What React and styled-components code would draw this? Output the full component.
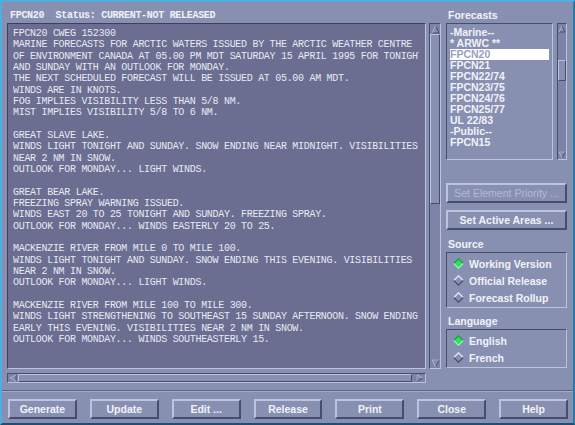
import styled, { createGlobalStyle } from 'styled-components';

const FACE = '#8890b2';
const WELL = '#6b6e90';
const LIGHT = '#bcc3de';
const DARK = '#474d6e';
const INK = '#f1f2f8';

const GlobalStyle = createGlobalStyle`
  html, body {
    margin: 0;
    padding: 0;
    background: ${FACE};
  }
  body {
    font-family: "Liberation Sans", Arial, sans-serif;
  }
`;

const Window = styled.div`
  width: 575px;
  height: 425px;
  box-sizing: border-box;
  border: 2px solid;
  border-color: #4eaee0 #2f78a4 #1d4f72 #4eaee0;
  background: ${FACE};
  display: flex;
  flex-direction: column;
  padding: 6px 4px 0 5px;
`;

const Main = styled.div`
  display: flex;
  gap: 5px;
  height: 374px;
`;

const LeftColumn = styled.div`
  width: 434px;
  display: flex;
  flex-direction: column;
`;

const Title = styled.div`
  height: 15px;
  line-height: 15px;
  padding-left: 3px;
  font-family: "Liberation Mono", "DejaVu Sans Mono", monospace;
  font-size: 10px;
  letter-spacing: -0.3px;
  font-weight: bold;
  color: ${INK};
  white-space: pre;
`;

const TextRow = styled.div`
  display: flex;
  gap: 3px;
  height: 346px;
`;

const TextBox = styled.div`
  flex: 1;
  box-sizing: border-box;
  background: ${WELL};
  border: 1px solid;
  border-color: #3c405e ${LIGHT} ${LIGHT} #3c405e;
  padding: 4px 6px 0 5px;
  overflow: hidden;
`;

const TextClip = styled.pre`
  margin: 0;
  overflow: hidden;
  font-family: "Liberation Mono", "DejaVu Sans Mono", monospace;
  font-size: 10px;
  letter-spacing: -0.3px;
  line-height: 11.33px;
  color: #e7e9f3;
`;

const Scroll = styled.div`
  box-sizing: border-box;
  display: flex;
  flex-direction: ${({ $horizontal }) => ($horizontal ? 'row' : 'column')};
  width: ${({ $w }) => $w}px;
  height: ${({ $h }) => $h}px;
  border: 1px solid;
  border-color: ${DARK} ${LIGHT} ${LIGHT} ${DARK};
  background: #7c83a6;
`;

const Thumb = styled.div`
  box-sizing: border-box;
  border: 1px solid;
  border-color: ${LIGHT} ${DARK} ${DARK} ${LIGHT};
  background: ${FACE};
  ${({ $horizontal, $size }) => ($horizontal ? `width: ${$size}px;` : `height: ${$size}px;`)}
  flex-shrink: 0;
`;

const Spacer = styled.div`
  flex: 1;
`;

const ArrowCell = styled.div`
  display: flex;
  align-items: center;
  justify-content: center;
  flex-shrink: 0;
  width: ${({ $w }) => $w}px;
  height: ${({ $h }) => $h}px;
`;

const HScrollRow = styled.div`
  margin-top: 4px;
  width: 419px;
`;

const RightColumn = styled.div`
  width: 121px;
  display: flex;
  flex-direction: column;
`;

const Label = styled.div`
  height: 15px;
  line-height: 15px;
  padding-left: 2px;
  margin-top: ${({ $top }) => $top || 0}px;
  font-size: 10.5px;
  font-weight: bold;
  color: ${INK};
`;

const ListRow = styled.div`
  display: flex;
  justify-content: space-between;
  height: 137px;
`;

const ListBox = styled.div`
  width: 107px;
  box-sizing: border-box;
  border: 1px solid;
  border-color: ${DARK} ${LIGHT} ${LIGHT} ${DARK};
  padding: 3px 3px 0 3px;
  overflow: hidden;
`;

const ListItem = styled.div`
  height: 11px;
  line-height: 11px;
  font-size: 10.5px;
  font-weight: bold;
  color: ${({ $selected }) => ($selected ? '#98a0c2' : INK)};
  background: ${({ $selected }) => ($selected ? '#ffffff' : 'transparent')};
  white-space: pre;
`;

const SideButton = styled.button`
  display: block;
  width: 121px;
  height: 20px;
  margin-top: ${({ $top }) => $top}px;
  padding: 0;
  box-sizing: border-box;
  border: 2px solid;
  border-color: ${LIGHT} ${DARK} ${DARK} ${LIGHT};
  background: ${FACE};
  font-family: "Liberation Sans", Arial, sans-serif;
  font-size: ${({ disabled }) => (disabled ? '10.5px' : '10.5px')};
  font-weight: ${({ disabled }) => (disabled ? 'normal' : 'bold')};
  color: ${({ disabled }) => (disabled ? '#b3b9d5' : INK)};
`;

const RadioBox = styled.div`
  box-sizing: border-box;
  border: 1px solid;
  border-color: ${DARK} ${LIGHT} ${LIGHT} ${DARK};
  padding: 2px 0 1px 6px;
`;

const RadioRow = styled.div`
  display: flex;
  align-items: center;
  gap: 5px;
  height: 17px;
  font-size: 10.5px;
  font-weight: bold;
  color: ${INK};
`;

const Separator = styled.div`
  margin-top: 8px;
  height: 0;
  border-top: 1px solid #5a6084;
  border-bottom: 1px solid #a4abca;
  margin-left: -5px;
  margin-right: -4px;
`;

const ButtonBar = styled.div`
  display: grid;
  grid-template-columns: repeat(7, 1fr);
  gap: 13px;
  margin-top: 7px;
  padding: 0 1px 0 1px;
`;

const BarButton = styled.button`
  height: 20px;
  padding: 0;
  box-sizing: border-box;
  border: 2px solid;
  border-color: ${LIGHT} ${DARK} ${DARK} ${LIGHT};
  background: ${FACE};
  font-family: "Liberation Sans", Arial, sans-serif;
  font-size: 10.5px;
  font-weight: bold;
  color: ${INK};
`;

const Arrow = ({ dir, size = 9 }) => {
  const s = size;
  const pts = {
    up: [[s / 2, 1], [s - 1, s - 1], [1, s - 1]],
    down: [[1, 1], [s - 1, 1], [s / 2, s - 1]],
    left: [[1, s / 2], [s - 1, 1], [s - 1, s - 1]],
    right: [[1, 1], [s - 1, s / 2], [1, s - 1]],
  }[dir];
  const str = (arr) => arr.map((p) => p.join(',')).join(' ');
  return (
    <svg width={s} height={s} viewBox={`0 0 ${s} ${s}`}>
      <polygon points={str(pts)} fill={FACE} stroke={DARK} strokeWidth="1" />
      <polyline
        points={str(dir === 'up' ? [pts[2], pts[0]] : dir === 'left' ? [pts[2], pts[0], pts[1]] : [pts[2], pts[0], pts[1]])}
        fill="none"
        stroke={LIGHT}
        strokeWidth="1"
      />
    </svg>
  );
};

const Diamond = ({ on }) => (
  <svg width="11" height="11" viewBox="0 0 11 11">
    <polygon points="5.5,0.8 10.2,5.5 5.5,10.2 0.8,5.5" fill={on ? '#2fe05c' : 'none'} />
    <polyline points="0.8,5.5 5.5,0.8 10.2,5.5" fill="none" stroke={on ? '#1e9c44' : '#e4e7f4'} strokeWidth="1.3" />
    <polyline points="0.8,5.5 5.5,10.2 10.2,5.5" fill="none" stroke={on ? '#8ff3aa' : '#4c5274'} strokeWidth="1.3" />
  </svg>
);

const bulletin = `FPCN20 CWEG 152300
MARINE FORECASTS FOR ARCTIC WATERS ISSUED BY THE ARCTIC WEATHER CENTRE
OF ENVIRONMENT CANADA AT 05.00 PM MDT SATURDAY 15 APRIL 1995 FOR TONIGHT
AND SUNDAY WITH AN OUTLOOK FOR MONDAY.
THE NEXT SCHEDULED FORECAST WILL BE ISSUED AT 05.00 AM MDT.
WINDS ARE IN KNOTS.
FOG IMPLIES VISIBILITY LESS THAN 5/8 NM.
MIST IMPLIES VISIBILITY 5/8 TO 6 NM.

GREAT SLAVE LAKE.
WINDS LIGHT TONIGHT AND SUNDAY. SNOW ENDING NEAR MIDNIGHT. VISIBILITIES
NEAR 2 NM IN SNOW.
OUTLOOK FOR MONDAY... LIGHT WINDS.

GREAT BEAR LAKE.
FREEZING SPRAY WARNING ISSUED.
WINDS EAST 20 TO 25 TONIGHT AND SUNDAY. FREEZING SPRAY.
OUTLOOK FOR MONDAY... WINDS EASTERLY 20 TO 25.

MACKENZIE RIVER FROM MILE 0 TO MILE 100.
WINDS LIGHT TONIGHT AND SUNDAY. SNOW ENDING THIS EVENING. VISIBILITIES
NEAR 2 NM IN SNOW.
OUTLOOK FOR MONDAY... LIGHT WINDS.

MACKENZIE RIVER FROM MILE 100 TO MILE 300.
WINDS LIGHT STRENGTHENING TO SOUTHEAST 15 SUNDAY AFTERNOON. SNOW ENDING
EARLY THIS EVENING. VISIBILITIES NEAR 2 NM IN SNOW.
OUTLOOK FOR MONDAY... WINDS SOUTHEASTERLY 15.`;

const forecasts = [
  '-Marine--',
  '* ARWC **',
  'FPCN20',
  'FPCN21',
  'FPCN22/74',
  'FPCN23/75',
  'FPCN24/76',
  'FPCN25/77',
  'UL 22/83',
  '-Public--',
  'FPCN15',
];

const sources = ['Working Version', 'Official Release', 'Forecast Rollup'];
const languages = ['English', 'French'];
const actions = ['Generate', 'Update', 'Edit ...', 'Release', 'Print', 'Close', 'Help'];

export default function App() {
  return (
    <>
      <GlobalStyle />
      <Window>
        <Main>
          <LeftColumn>
            <Title>{'FPCN20  Status: CURRENT-NOT RELEASED'}</Title>
            <TextRow>
              <TextBox>
                <TextClip>{bulletin}</TextClip>
              </TextBox>
              <Scroll $w={12} $h={346}>
                <ArrowCell $w={10} $h={10}><Arrow dir="up" /></ArrowCell>
                <Thumb $size={170} />
                <Spacer />
                <ArrowCell $w={10} $h={10}><Arrow dir="down" /></ArrowCell>
              </Scroll>
            </TextRow>
            <HScrollRow>
              <Scroll $horizontal $w={419} $h={10}>
                <ArrowCell $w={10} $h={8}><Arrow dir="left" size={8} /></ArrowCell>
                <Thumb $horizontal $size={394} />
                <Spacer />
                <ArrowCell $w={10} $h={8}><Arrow dir="right" size={8} /></ArrowCell>
              </Scroll>
            </HScrollRow>
          </LeftColumn>

          <RightColumn>
            <Label>Forecasts</Label>
            <ListRow>
              <ListBox>
                {forecasts.map((f) => (
                  <ListItem key={f} $selected={f === 'FPCN20'}>{f}</ListItem>
                ))}
              </ListBox>
              <Scroll $w={10} $h={137}>
                <ArrowCell $w={8} $h={9}><Arrow dir="up" size={8} /></ArrowCell>
                <Spacer style={{ flex: '0 0 27px' }} />
                <Thumb $size={21} />
                <Spacer />
                <ArrowCell $w={8} $h={9}><Arrow dir="down" size={8} /></ArrowCell>
              </Scroll>
            </ListRow>
            <SideButton $top={23} disabled>Set Element Priority ...</SideButton>
            <SideButton $top={7}>Set Active Areas ...</SideButton>
            <Label $top={7}>Source</Label>
            <RadioBox>
              {sources.map((s, i) => (
                <RadioRow key={s}>
                  <Diamond on={i === 0} />
                  {s}
                </RadioRow>
              ))}
            </RadioBox>
            <Label $top={6}>Language</Label>
            <RadioBox>
              {languages.map((l, i) => (
                <RadioRow key={l}>
                  <Diamond on={i === 0} />
                  {l}
                </RadioRow>
              ))}
            </RadioBox>
          </RightColumn>
        </Main>
        <Separator />
        <ButtonBar>
          {actions.map((a) => (
            <BarButton key={a}>{a}</BarButton>
          ))}
        </ButtonBar>
      </Window>
    </>
  );
}
